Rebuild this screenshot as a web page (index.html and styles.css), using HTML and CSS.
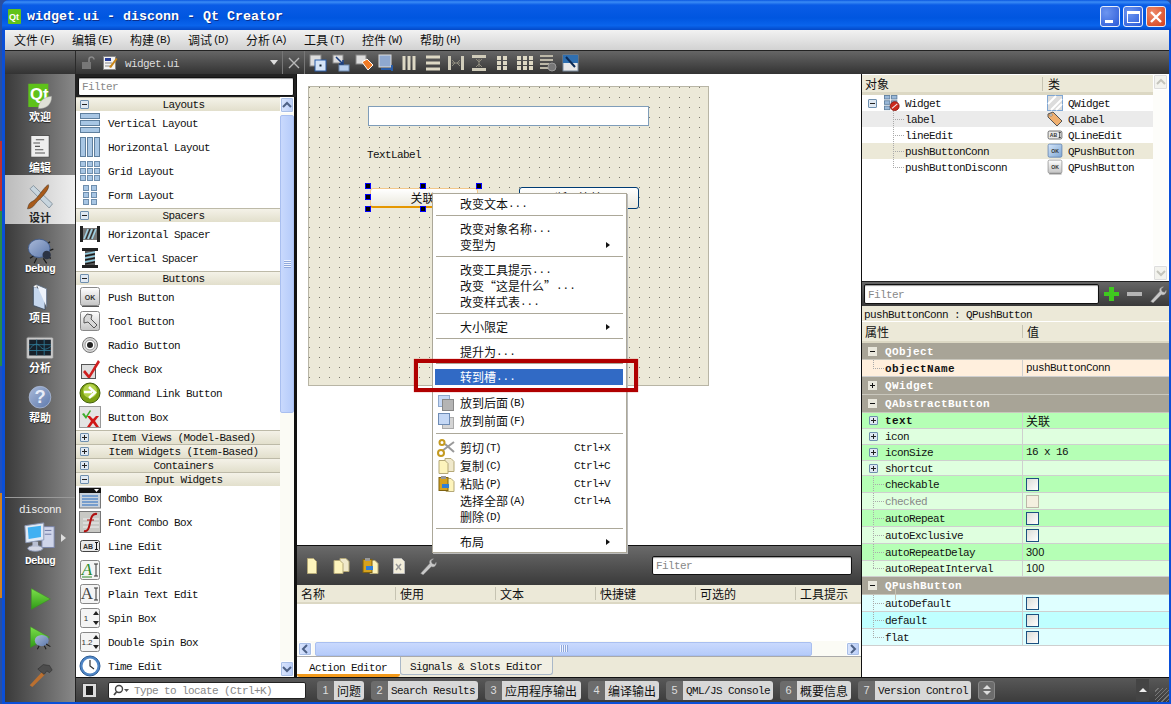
FILE: index.html
```html
<!DOCTYPE html>
<html lang="zh">
<head>
<meta charset="utf-8">
<title>widget.ui - disconn - Qt Creator</title>
<link rel="stylesheet" href="styles.css">
</head>
<body>
<svg class="defs" width="0" height="0" aria-hidden="true">
<defs>
<linearGradient id="gb" x1="0" y1="0" x2="0" y2="1"><stop offset="0" stop-color="#fff"/><stop offset="1" stop-color="#c4c4c4"/></linearGradient>
<linearGradient id="gbl" x1="0" y1="0" x2="1" y2="1"><stop offset="0" stop-color="#d5e6fa"/><stop offset="1" stop-color="#7ea6d3"/></linearGradient>
<linearGradient id="gg" x1="0" y1="0" x2="0" y2="1"><stop offset="0" stop-color="#7ce04a"/><stop offset="1" stop-color="#2f9a17"/></linearGradient>
<linearGradient id="gsc" x1="0" y1="0" x2="1" y2="1"><stop offset="0" stop-color="#a9b9d8"/><stop offset="1" stop-color="#5d79ac"/></linearGradient>
<symbol id="i-lv" viewBox="0 0 22 22"><g fill="#a8c6e4" stroke="#5f7f9e"><rect x="1.5" y="1.5" width="19" height="5"/><rect x="1.5" y="8.5" width="19" height="5"/><rect x="1.5" y="15.5" width="19" height="5"/></g></symbol>
<symbol id="i-lh" viewBox="0 0 22 22"><g fill="#a8c6e4" stroke="#5f7f9e"><rect x="1.5" y="1.5" width="5" height="19"/><rect x="8.5" y="1.5" width="5" height="19"/><rect x="15.5" y="1.5" width="5" height="19"/></g></symbol>
<symbol id="i-lg" viewBox="0 0 22 22"><g fill="#a8c6e4" stroke="#6f8fae"><rect x="1.5" y="1.5" width="5" height="5"/><rect x="8.5" y="1.5" width="5" height="5"/><rect x="15.5" y="1.5" width="5" height="5"/><rect x="1.5" y="8.5" width="5" height="5"/><rect x="8.5" y="8.5" width="5" height="5"/><rect x="15.5" y="8.5" width="5" height="5"/><rect x="1.5" y="15.5" width="5" height="5"/><rect x="8.5" y="15.5" width="5" height="5"/><rect x="15.5" y="15.5" width="5" height="5"/></g></symbol>
<symbol id="i-lf" viewBox="0 0 22 22"><g fill="#a8c6e4" stroke="#6f8fae"><rect x="4.5" y="1.5" width="5" height="5"/><rect x="12.5" y="1.5" width="5" height="5"/><rect x="4.5" y="8.5" width="5" height="5"/><rect x="12.5" y="8.5" width="5" height="5"/><rect x="4.5" y="15.5" width="5" height="5"/><rect x="12.5" y="15.5" width="5" height="5"/></g></symbol>
<symbol id="i-sh" viewBox="0 0 22 22"><rect x="1" y="3" width="3" height="16" fill="#222"/><rect x="18" y="3" width="3" height="16" fill="#222"/><rect x="4" y="5" width="14" height="12" fill="#777"/><path d="M5 16 9 6M9 16l4-10M13 16l4-10" stroke="#9ed3e6" stroke-width="1.5"/><path d="M7 16l4-10M11 16l4-10" stroke="#222"/></symbol>
<symbol id="i-sv" viewBox="0 0 22 22"><rect x="3" y="1" width="16" height="3" fill="#222"/><rect x="3" y="18" width="16" height="3" fill="#222"/><rect x="6" y="4" width="10" height="14" fill="#555"/><path d="M6 7l10-2M6 11l10-2M6 15l10-2" stroke="#8fcbe0" stroke-width="1.5"/><path d="M6 9l10-2M6 13l10-2M6 17l10-2" stroke="#111"/></symbol>
<symbol id="i-ok" viewBox="0 0 22 22"><rect x="1.5" y="1.5" width="19" height="18" rx="2" fill="url(#gb)" stroke="#888"/><path d="M3 20.5h17" stroke="#555"/><text class="svgt" x="11" y="13.5" text-anchor="middle">OK</text></symbol>
<symbol id="i-okb" viewBox="0 0 22 22"><rect x="1.5" y="1.5" width="19" height="18" rx="2" fill="url(#gbl)" stroke="#5578a8"/><text class="svgt" x="11" y="13.5" text-anchor="middle">OK</text></symbol>
<symbol id="i-tb" viewBox="0 0 22 22"><rect x="1.5" y="1.5" width="19" height="19" rx="2" fill="url(#gb)" stroke="#888"/><path d="M5 8l3-4 5 1-1 4 6 6-3 3-6-6-4 1z" fill="#d8d8d8" stroke="#555"/></symbol>
<symbol id="i-rb" viewBox="0 0 22 22"><circle cx="11" cy="11" r="7.5" fill="#d8d8d8" stroke="#777"/><circle cx="11" cy="11" r="5" fill="#fff" stroke="#999"/><circle cx="11" cy="11" r="3" fill="#222"/></symbol>
<symbol id="i-cb" viewBox="0 0 22 22"><rect x="2.5" y="6.5" width="14" height="14" fill="#dedede" stroke="#555"/><path d="M6 12l4 5L19 2l2 2-10 16H9L4 14z" fill="#cf1f1f"/></symbol>
<symbol id="i-cl" viewBox="0 0 22 22"><circle cx="11" cy="11" r="10" fill="#7b9f12" stroke="#43600a"/><circle cx="11" cy="9" r="7" fill="#b3d24a"/><path d="M5 10h8M10 5l6 5.500-6 5.500" fill="none" stroke="#fff" stroke-width="2.500"/></symbol>
<symbol id="i-bb" viewBox="0 0 22 22"><rect x=".5" y=".5" width="21" height="21" fill="#e4e4e4" stroke="#999"/><path d="M3 8l2-1 2 3 4-6 1 1-5 8z" fill="#3eae2c"/><path d="M8 10l3 0 3 3 3-3 3 0-4 5 4 6h-3l-3-4-3 4H8l4-6z" fill="#d01818"/></symbol>
<symbol id="i-co" viewBox="0 0 22 22"><rect x=".5" y="1" width="21" height="20" fill="#c8d2dc" stroke="#777"/><rect x="0" y="1" width="22" height="5" fill="#111"/><path d="M15 2h5l-2.500 3z" fill="#fff"/><path d="M3 9h16M3 12h16M3 15h16M3 18h16" stroke="#5a8cc8" stroke-width="1.500"/></symbol>
<symbol id="i-fc" viewBox="0 0 22 22"><rect x=".5" y=".5" width="21" height="21" fill="#c8c8c4" stroke="#777"/><path d="M4 8h16M4 12h16M4 16h16" stroke="#efefef"/><path d="M5 20c4 1 5-3 6-8s2-10 7-9" fill="none" stroke="#b01010" stroke-width="2"/><path d="M8 9h7" stroke="#b01010"/></symbol>
<symbol id="i-le" viewBox="0 0 22 22"><rect x="1.500" y="5.500" width="19" height="11" rx="2" fill="#e8e8e8" stroke="#444"/><text class="svgt" x="9" y="14" text-anchor="middle">AB</text><path d="M16 7.500h3M16 14.500h3M17.500 7.500v7" stroke="#111"/></symbol>
<symbol id="i-te" viewBox="0 0 22 22"><rect x="1.500" y="1.500" width="19" height="19" rx="2" fill="#f4f4f4" stroke="#888"/><text class="svgs gr" x="8" y="16" text-anchor="middle">A</text><path d="M3 18h10" stroke="#2a8a2a"/><path d="M15 5h4M15 17h4M17 5v12" stroke="#333"/></symbol>
<symbol id="i-pt" viewBox="0 0 22 22"><rect x="1.500" y="1.500" width="19" height="19" rx="2" fill="#f4f4f4" stroke="#888"/><text class="svgs" x="8" y="16" text-anchor="middle">A</text><path d="M15 5h4M15 17h4M17 5v12" stroke="#333"/></symbol>
<symbol id="i-sp" viewBox="0 0 22 22"><rect x="1.500" y="1.500" width="19" height="19" rx="2" fill="#f4f4f4" stroke="#888"/><text class="svgt dk" x="7" y="14" text-anchor="middle">1</text><path d="M14 8l3-4 3 4zM14 14l3 4 3-4z" fill="#222"/></symbol>
<symbol id="i-ds" viewBox="0 0 22 22"><rect x="1.500" y="1.500" width="19" height="19" rx="2" fill="#f4f4f4" stroke="#888"/><text class="svgt dk" x="8" y="14" text-anchor="middle">1.2</text><path d="M14 8l3-4 3 4zM14 14l3 4 3-4z" fill="#222"/></symbol>
<symbol id="i-ti" viewBox="0 0 22 22"><circle cx="11" cy="11" r="10" fill="#4f86c6" stroke="#2d5d96"/><circle cx="11" cy="11" r="7.500" fill="#fff"/><path d="M11 5v6l4 3" fill="none" stroke="#333" stroke-width="1.200"/></symbol>
<symbol id="i-ws" viewBox="0 0 16 16"><rect x=".5" y=".5" width="15" height="15" fill="#dcdcdc" stroke="#7ea6d3"/><path d="M1 9l8-8M4 15L15 4M9 15l6-6" stroke="#fff" stroke-width="2"/></symbol>
<symbol id="i-lb" viewBox="0 0 16 16"><path d="M1 3l5-2 9 9-5 5-9-9z" fill="#f0b070" stroke="#555"/><circle cx="4" cy="4" r="1.200" fill="#fff" stroke="#555" stroke-width=".6"/></symbol>
<symbol id="i-wd" viewBox="0 0 18 18"><g fill="#9ab8d8" stroke="#5f7f9e"><rect x=".5" y=".5" width="6" height="4"/><rect x="8.500" y=".5" width="6" height="4"/><rect x=".5" y="6.500" width="6" height="4"/><rect x="8.500" y="6.500" width="6" height="4"/><rect x=".5" y="12.500" width="6" height="4"/></g><circle cx="12" cy="12.500" r="5" fill="#cc2a1e" stroke="#8a150e"/><path d="M9 15l6-5" stroke="#eee" stroke-width="1.200"/></symbol>
<symbol id="i-doc" viewBox="0 0 18 18"><path d="M4.500 1.500h6l3 3v12h-9z" fill="#fdf4bc" stroke="#b5a978"/></symbol>
<symbol id="i-copy" viewBox="0 0 18 18"><path d="M8 1.500h6l3 3v10H8z" fill="#f0e9cc" stroke="#b5a978"/><path d="M2 3.500h6l3 3v10H2z" fill="#fdf4bc" stroke="#b5a978"/></symbol>
<symbol id="i-paste" viewBox="0 0 18 18"><path d="M9 3.500h5l3 3v10H9z" fill="#fdf4bc" stroke="#b5a978"/><rect x="2" y="2.500" width="9" height="13" fill="#d6a21e" stroke="#7f6210"/><rect x="4" y="1" width="5" height="3" fill="#999"/><path d="M5 9h7v4H5z" fill="#2f7fd8"/></symbol>
<symbol id="i-del" viewBox="0 0 18 18"><path d="M3.500 1.500h8l3 3v12h-11z" fill="#f3eedb" stroke="#bbb"/><path d="M6 7l5 6M11 7l-5 6" stroke="#999" stroke-width="1.500"/></symbol>
<symbol id="i-cut" viewBox="0 0 18 18"><path d="M17 3L5 12M17 13L8 5" stroke="#9a9a9a" stroke-width="2"/><circle cx="4" cy="14" r="3" fill="none" stroke="#c49a20" stroke-width="2"/><circle cx="5" cy="3.500" r="2.500" fill="none" stroke="#c49a20" stroke-width="2"/></symbol>
<symbol id="i-wr" viewBox="0 0 22 22"><path d="M2 20L13 8c-1-3 1-6 5-6l-3 3 1 3 3 1 2-3c1 4-2 7-6 6L5 22z" fill="#c8c8c8" stroke="#777" stroke-width=".6"/></symbol>
<symbol id="i-back" viewBox="0 0 18 18"><rect x="1.500" y="1.500" width="11" height="11" fill="#c5d8f5" stroke="#8ea8cc"/><rect x="5.500" y="5.500" width="11" height="11" fill="#b4b4b4" stroke="#888"/></symbol>
<symbol id="i-front" viewBox="0 0 18 18"><rect x="5.500" y="5.500" width="11" height="11" fill="#d4d4d4" stroke="#aaa"/><rect x="1.500" y="1.500" width="11" height="11" fill="#c5d8f5" stroke="#6f8cb4"/></symbol>
<symbol id="i-bug" viewBox="0 0 36 36"><path d="M12 24l-6 4M14 28l-3 6M24 24l7 4M22 28l4 6M24 13l6-5M28 19l6-2" stroke="#1c1c1c" stroke-width="1.500" fill="none"/><ellipse cx="17" cy="16" rx="13" ry="11" fill="url(#gsc)" stroke="#3e5a8c"/><circle cx="26" cy="24" r="5" fill="#2b3345"/></symbol>
</defs>
</svg>
<div class="win">
  <header class="titlebar">
    <svg class="ticon" viewBox="0 0 16 18"><rect x="1" y="1" width="13" height="15" rx="1" fill="#61c21a"/><text class="qt-s" x="2" y="12">Qt</text></svg>
    <span class="ttext">widget.ui - disconn - Qt Creator</span>
    <div class="wbtns">
      <div class="wb wb-min"><span class="g-min"></span></div>
      <div class="wb wb-max"><span class="g-max"></span></div>
      <div class="wb wb-close"><svg viewBox="0 0 14 14" width="14" height="14"><path d="M2 2l10 10M12 2L2 12" stroke="#fff" stroke-width="2.400"/></svg></div>
    </div>
  </header>
  <nav class="menubar">
    <span class="mb"><span class="c">文件</span><span class="acc">(F)</span></span>
    <span class="mb"><span class="c">编辑</span><span class="acc">(E)</span></span>
    <span class="mb"><span class="c">构建</span><span class="acc">(B)</span></span>
    <span class="mb"><span class="c">调试</span><span class="acc">(D)</span></span>
    <span class="mb"><span class="c">分析</span><span class="acc">(A)</span></span>
    <span class="mb"><span class="c">工具</span><span class="acc">(T)</span></span>
    <span class="mb"><span class="c">控件</span><span class="acc">(W)</span></span>
    <span class="mb"><span class="c">帮助</span><span class="acc">(H)</span></span>
  </nav>
  <div class="shell">
    <div class="topbar">
      <div class="corner"></div>
      <div class="doctab">
        <svg class="lock" viewBox="0 0 14 14" width="14" height="14"><path d="M8 6V3.500a2.500 2.500 0 0 1 5 0" fill="none" stroke="#8a8a8a" stroke-width="1.500"/><rect x="1" y="6" width="9" height="7" fill="#777"/></svg>
        <svg class="docic" viewBox="0 0 16 16" width="16" height="16"><rect x="1.500" y="1.500" width="12" height="13" fill="#f4f4f4" stroke="#888"/><rect x="3" y="3" width="6" height="3" fill="#2a3f9a"/><path d="M3 8h7M3 11h7" stroke="#888"/><path d="M7 12L14 3l1.500 1L9 13z" fill="#c8861a"/></svg>
        <span class="docname">widget.ui</span>
        <span class="docarrow"></span>
      </div>
      <div class="docclose"><svg viewBox="0 0 12 12" width="12" height="12"><path d="M1 1l10 10M11 1L1 11" stroke="#b8b8b8" stroke-width="1.400"/></svg></div>
      <div class="fbtns">
        <svg class="fb" viewBox="0 0 18 18"><rect x="1" y="1" width="11" height="11" fill="#ddd" stroke="#888"/><rect x="6" y="6" width="11" height="11" fill="#d5e4f7" stroke="#2a5da8"/><rect x="10.500" y="10.500" width="2" height="2" fill="#123"/></svg>
        <svg class="fb" viewBox="0 0 18 18"><rect x="1" y="1" width="10" height="8" fill="#ddd" stroke="#888"/><rect x="7" y="11" width="10" height="6" fill="#b9cfee" stroke="#6f8cb4"/><path d="M4 3l7 7M11 6v4H7" stroke="#1c3f80" stroke-width="1.500" fill="none"/></svg>
        <svg class="fb" viewBox="0 0 18 18"><rect x="1" y="1" width="10" height="9" fill="#ddd" stroke="#888"/><path d="M7 8l5-3 6 6-5 5z" fill="#f07a25" stroke="#fff"/></svg>
        <svg class="fb" viewBox="0 0 18 18"><rect x="1" y="1" width="12" height="12" fill="#8fa8cf" stroke="#ddd"/><path d="M3 15h10M14 11v6" stroke="#2a5da8" stroke-width="2"/></svg>
        <svg class="fb" viewBox="0 0 18 18"><path d="M3 2v14M8 2v14M13 2v14" stroke="#ddd8c4" stroke-width="3"/></svg>
        <svg class="fb" viewBox="0 0 18 18"><path d="M2 3h14M2 9h14M2 15h14" stroke="#ddd8c4" stroke-width="3"/></svg>
        <svg class="fb" viewBox="0 0 18 18"><path d="M2.500 2v14M15.500 2v14" stroke="#d0ccba" stroke-width="3"/><path d="M5 9h8M5 6l3 3-3 3M13 6l-3 3 3 3" stroke="#8f8c7e" fill="none"/></svg>
        <svg class="fb" viewBox="0 0 18 18"><path d="M2 2.500h14M2 15.500h14" stroke="#d0ccba" stroke-width="3"/><path d="M9 5v8M6 5l3 3 3-3M6 13l3-3 3 3" stroke="#8f8c7e" fill="none"/></svg>
        <svg class="fb" viewBox="0 0 18 18"><g fill="#ddd8c4"><rect x="4" y="2" width="4" height="4"/><rect x="10" y="2" width="4" height="4"/><rect x="4" y="7" width="4" height="4"/><rect x="10" y="7" width="4" height="4"/><rect x="4" y="12" width="4" height="4"/><rect x="10" y="12" width="4" height="4"/></g></svg>
        <svg class="fb" viewBox="0 0 18 18"><g fill="#ddd8c4"><rect x="1" y="2" width="4" height="4"/><rect x="7" y="2" width="4" height="4"/><rect x="13" y="2" width="4" height="4"/><rect x="1" y="7" width="4" height="4"/><rect x="7" y="7" width="4" height="4"/><rect x="13" y="7" width="4" height="4"/><rect x="1" y="12" width="4" height="4"/><rect x="7" y="12" width="4" height="4"/><rect x="13" y="12" width="4" height="4"/></g></svg>
        <svg class="fb" viewBox="0 0 18 18"><path d="M1 2h13M1 6h13M1 10h9M1 14h9" stroke="#bcb8a8" stroke-width="2"/><circle cx="13" cy="13" r="4" fill="#777" stroke="#999"/></svg>
        <svg class="fb" viewBox="0 0 18 18"><rect x="1" y="1" width="15" height="16" fill="#e8e8e8" stroke="#7a8ca0"/><rect x="1" y="1" width="15" height="8" fill="#2f6fb0"/><path d="M4 3l9 10" stroke="#0b2a55" stroke-width="2"/></svg>
      </div>
    </div>

    <aside class="rail">
      <div class="rtab first">
        <svg class="ric" viewBox="0 0 36 36"><path d="M4 2h24v24l-6 4H4z" fill="#5ec21a"/><text class="qt" x="6" y="21">Qt</text><path d="M16 32c0-8 6-14 16-15 0 10-6 15-16 15z" fill="#dfe0d6" stroke="#999" stroke-width=".5"/></svg>
        <span class="rl c">欢迎</span>
      </div>
      <div class="rtab">
        <svg class="ric" viewBox="0 0 36 36"><rect x="7" y="3" width="22" height="26" fill="#eee" stroke="#444"/><path d="M13 8h10M10 12h8M12 16h6M12 20h10M12 24h12" stroke="#555" stroke-width="1.300"/></svg>
        <span class="rl c">编辑</span>
      </div>
      <div class="rtab active">
        <svg class="ric" viewBox="0 0 36 36"><path d="M6 7l4-4 23 22-4 5z" fill="#c8d5de" stroke="#7b8a96"/><path d="M28 2c2 3-3 11-13 20l-5 6c-2 2-5 3-7 3 1-3 1-6 4-8 2-1 4-2 6-4C19 12 24 4 28 2z" fill="#a85a1a" stroke="#3d2a18" stroke-width=".6"/></svg>
        <span class="rl c dark">设计</span>
      </div>
      <div class="rtab">
        <svg class="ric" viewBox="0 0 36 36"><use href="#i-bug"/></svg>
        <span class="rl m">Debug</span>
      </div>
      <div class="rtab">
        <svg class="ric" viewBox="0 0 36 36"><path d="M10 4l14 5v23l-14-5z" fill="#c6d7ee" stroke="#37465a"/><path d="M14 2l12 5v22" fill="#eef3fb" stroke="#5b6c82"/><path d="M10 4l4-2v4" fill="#fff"/></svg>
        <span class="rl c">项目</span>
      </div>
      <div class="rtab">
        <svg class="ric" viewBox="0 0 36 36"><rect x="2" y="5" width="32" height="26" rx="2" fill="#c8c8c8" stroke="#777"/><rect x="5" y="8" width="26" height="19" fill="#16202a"/><path d="M5 20c6-8 10-8 13-4s7 5 13 0M14 8v19M23 8v19M5 14h26M5 21h26" stroke="#2f7a96" fill="none"/></svg>
        <span class="rl c">分析</span>
      </div>
      <div class="rtab">
        <svg class="ric" viewBox="0 0 36 36"><circle cx="18" cy="17" r="13" fill="url(#gsc)" stroke="#aab8d4"/><text class="help" x="18" y="24" text-anchor="middle">?</text></svg>
        <span class="rl c">帮助</span>
      </div>
      <div class="rspace"></div>
      <div class="kit">
        <span class="kitname">disconn</span>
        <div class="kitrow">
          <svg class="kitic" viewBox="0 0 36 36"><rect x="20" y="6" width="13" height="22" fill="#cfd5ea" stroke="#7a84a8"/><path d="M23 10h7M23 14h7" stroke="#6a75a0"/><path d="M2 5l20-3v18L3 23z" fill="#dfe9f5" stroke="#8a97b5"/><path d="M5 7l14-2v12L6 19z" fill="#3fb0f2"/><ellipse cx="13" cy="29" rx="8" ry="3" fill="#d5d8e5" stroke="#8a97b5"/><path d="M10 22h6v5h-6z" fill="#b9bfd2"/></svg>
          <span class="kitarrow"></span>
        </div>
        <span class="rl m kitdbg">Debug</span>
      </div>
      <div class="runbtn run1"><svg viewBox="0 0 30 30" width="26" height="26"><path d="M5 3l22 12L5 27z" fill="url(#gg)" stroke="#3c8a25" stroke-width=".6"/></svg></div>
      <div class="runbtn"><svg viewBox="0 0 30 30" width="26" height="26"><path d="M4 2l22 12L4 26z" fill="url(#gg)" stroke="#3c8a25" stroke-width=".6"/><ellipse cx="17" cy="18" rx="8" ry="6.500" fill="url(#gsc)"/><path d="M22 22l5 3M14 24l-2 4M20 24l2 4" stroke="#1c1c1c" stroke-width="1.200"/></svg></div>
      <div class="runbtn run3"><svg viewBox="0 0 30 30" width="27" height="27"><path d="M3 27L17 12l3 3L6 29z" fill="#bb7030"/><path d="M12 9l6-5 7 1 3 5-3 3-3-2-3 4z" fill="#4d4d4d" stroke="#222" stroke-width=".5"/></svg></div>
    </aside>

    <section class="wbox">
      <div class="fltrow"><div class="flt">Filter</div></div>
      <div class="wbody">
        <div class="wlist">
          <div class="cat"><span class="exp"></span><span class="catn">Layouts</span></div>
          <div class="item"><svg class="iic"><use href="#i-lv"/></svg>Vertical Layout</div>
          <div class="item"><svg class="iic"><use href="#i-lh"/></svg>Horizontal Layout</div>
          <div class="item"><svg class="iic"><use href="#i-lg"/></svg>Grid Layout</div>
          <div class="item"><svg class="iic"><use href="#i-lf"/></svg>Form Layout</div>
          <div class="cat"><span class="exp"></span><span class="catn">Spacers</span></div>
          <div class="item"><svg class="iic"><use href="#i-sh"/></svg>Horizontal Spacer</div>
          <div class="item"><svg class="iic"><use href="#i-sv"/></svg>Vertical Spacer</div>
          <div class="cat"><span class="exp"></span><span class="catn">Buttons</span></div>
          <div class="item"><svg class="iic"><use href="#i-ok"/></svg>Push Button</div>
          <div class="item"><svg class="iic"><use href="#i-tb"/></svg>Tool Button</div>
          <div class="item"><svg class="iic"><use href="#i-rb"/></svg>Radio Button</div>
          <div class="item"><svg class="iic"><use href="#i-cb"/></svg>Check Box</div>
          <div class="item"><svg class="iic"><use href="#i-cl"/></svg>Command Link Button</div>
          <div class="item"><svg class="iic"><use href="#i-bb"/></svg>Button Box</div>
          <div class="cat"><span class="exp plus"></span><span class="catn">Item Views (Model-Based)</span></div>
          <div class="cat"><span class="exp plus"></span><span class="catn">Item Widgets (Item-Based)</span></div>
          <div class="cat"><span class="exp plus"></span><span class="catn">Containers</span></div>
          <div class="cat"><span class="exp"></span><span class="catn">Input Widgets</span></div>
          <div class="item"><svg class="iic"><use href="#i-co"/></svg>Combo Box</div>
          <div class="item"><svg class="iic"><use href="#i-fc"/></svg>Font Combo Box</div>
          <div class="item"><svg class="iic"><use href="#i-le"/></svg>Line Edit</div>
          <div class="item"><svg class="iic"><use href="#i-te"/></svg>Text Edit</div>
          <div class="item"><svg class="iic"><use href="#i-pt"/></svg>Plain Text Edit</div>
          <div class="item"><svg class="iic"><use href="#i-sp"/></svg>Spin Box</div>
          <div class="item"><svg class="iic"><use href="#i-ds"/></svg>Double Spin Box</div>
          <div class="item"><svg class="iic"><use href="#i-ti"/></svg>Time Edit</div>
        </div>
        <div class="vsb">
          <div class="sbb"><svg viewBox="0 0 10 8" width="10" height="8"><path d="M1 6l4-4 4 4" fill="none" stroke="#4d6185" stroke-width="2"/></svg></div>
          <div class="vthumb"><span class="grip"></span></div>
          <div class="sbfill"></div>
          <div class="sbb"><svg viewBox="0 0 10 8" width="10" height="8"><path d="M1 2l4 4 4-4" fill="none" stroke="#4d6185" stroke-width="2"/></svg></div>
        </div>
      </div>
    </section>

    <main class="center">
      <div class="canvas">
        <div class="form">
          <div class="f-line"></div>
          <div class="f-label">TextLabel</div>
          <div class="f-btn sel"><span class="c">关联</span></div>
          <div class="f-btn two"><span class="c">断开连接</span></div>
          <i class="hd h1"></i><i class="hd h2"></i><i class="hd h3"></i><i class="hd h4"></i><i class="hd h5"></i><i class="hd h6"></i>
        </div>
      </div>
      <div class="actbar">
        <svg class="ab"><use href="#i-doc"/></svg>
        <svg class="ab"><use href="#i-copy"/></svg>
        <svg class="ab"><use href="#i-paste"/></svg>
        <svg class="ab"><use href="#i-del"/></svg>
        <svg class="ab"><use href="#i-wr"/></svg>
        <div class="flt actflt">Filter</div>
      </div>
      <div class="acthead">
        <span class="ah c">名称</span><span class="ah c">使用</span><span class="ah c">文本</span><span class="ah c">快捷键</span><span class="ah c">可选的</span><span class="ah c">工具提示</span>
      </div>
      <div class="actbody"></div>
      <div class="hsb">
        <div class="sbb hz"><svg viewBox="0 0 8 10" width="8" height="10"><path d="M6 1L2 5l4 4" fill="none" stroke="#4d6185" stroke-width="2"/></svg></div>
        <div class="hthumb"><span class="hgrip"></span></div>
        <div class="sbfill"></div>
        <div class="sbb hz"><svg viewBox="0 0 8 10" width="8" height="10"><path d="M2 1l4 4-4 4" fill="none" stroke="#4d6185" stroke-width="2"/></svg></div>
      </div>
      <div class="tabs">
        <div class="tab on">Action Editor</div>
        <div class="tab">Signals &amp; Slots Editor</div>
      </div>

      <div class="ctx">
        <div class="mi"><span class="c">改变文本</span><span class="dots">...</span></div>
        <div class="ms"></div>
        <div class="mi"><span class="c">改变对象名称</span><span class="dots">...</span></div>
        <div class="mi"><span class="c">变型为</span><i class="sub"></i></div>
        <div class="ms"></div>
        <div class="mi"><span class="c">改变工具提示</span><span class="dots">...</span></div>
        <div class="mi"><span class="c">改变“这是什么”</span><span class="dots">...</span></div>
        <div class="mi"><span class="c">改变样式表</span><span class="dots">...</span></div>
        <div class="ms"></div>
        <div class="mi"><span class="c">大小限定</span><i class="sub"></i></div>
        <div class="ms"></div>
        <div class="mi"><span class="c">提升为</span><span class="dots">...</span></div>
        <div class="ms"></div>
        <div class="mi hi"><span class="c">转到槽</span><span class="dots">...</span></div>
        <div class="ms"></div>
        <div class="mi ic"><svg class="mic"><use href="#i-back"/></svg><span class="c">放到后面</span><span class="acc">(B)</span></div>
        <div class="mi ic"><svg class="mic"><use href="#i-front"/></svg><span class="c">放到前面</span><span class="acc">(F)</span></div>
        <div class="ms"></div>
        <div class="mi ic"><svg class="mic"><use href="#i-cut"/></svg><span class="c">剪切</span><span class="acc">(T)</span><span class="sc">Ctrl+X</span></div>
        <div class="mi ic"><svg class="mic"><use href="#i-copy"/></svg><span class="c">复制</span><span class="acc">(C)</span><span class="sc">Ctrl+C</span></div>
        <div class="mi ic"><svg class="mic"><use href="#i-paste"/></svg><span class="c">粘贴</span><span class="acc">(P)</span><span class="sc">Ctrl+V</span></div>
        <div class="mi"><span class="c">选择全部</span><span class="acc">(A)</span><span class="sc">Ctrl+A</span></div>
        <div class="mi"><span class="c">删除</span><span class="acc">(D)</span></div>
        <div class="ms"></div>
        <div class="mi"><span class="c">布局</span><i class="sub"></i></div>
      </div>
      <div class="redbox"></div>
    </main>

    <section class="right">
      <div class="objs">
        <div class="objmain">
          <div class="ohead"><span class="oh1 c">对象</span><span class="oh2 c">类</span></div>
          <div class="orow"><div class="on"><span class="exp ox"></span><svg class="oic wd"><use href="#i-wd"/></svg>Widget</div><div class="oc"><svg class="oic"><use href="#i-ws"/></svg>QWidget</div></div>
          <div class="orow gry"><div class="on"><span class="bn"></span>label</div><div class="oc"><svg class="oic"><use href="#i-lb"/></svg>QLabel</div></div>
          <div class="orow"><div class="on"><span class="bn"></span>lineEdit</div><div class="oc"><svg class="oic"><use href="#i-le"/></svg>QLineEdit</div></div>
          <div class="orow cur"><div class="on"><span class="bn"></span>pushButtonConn</div><div class="oc"><svg class="oic"><use href="#i-okb"/></svg>QPushButton</div></div>
          <div class="orow"><div class="on"><span class="bn end"></span>pushButtonDisconn</div><div class="oc"><svg class="oic"><use href="#i-ok"/></svg>QPushButton</div></div>
        </div>
        <div class="vsb pale">
          <div class="sbb p"><svg viewBox="0 0 10 8" width="10" height="8"><path d="M1 6l4-4 4 4" fill="none" stroke="#c4c4bc" stroke-width="2"/></svg></div>
          <div class="sbfill"></div>
          <div class="sbb p"><svg viewBox="0 0 10 8" width="10" height="8"><path d="M1 2l4 4 4-4" fill="none" stroke="#c4c4bc" stroke-width="2"/></svg></div>
        </div>
      </div>
      <div class="ptool">
        <div class="flt pflt">Filter</div>
        <svg class="pt-i" viewBox="0 0 18 18"><path d="M6 2h5v5h5v4h-5v5H6v-5H1V7h5z" fill="#3fc81f"/></svg>
        <svg class="pt-i" viewBox="0 0 18 18"><rect x="1" y="7" width="15" height="4" fill="#b4b4b4"/></svg>
        <svg class="pt-i" viewBox="0 0 22 22"><use href="#i-wr"/></svg>
      </div>
      <div class="pclass">pushButtonConn : QPushButton</div>
      <div class="phead"><span class="ph1 c">属性</span><span class="ph2 c">值</span></div>
      <div class="pbody">
        <div class="grp h17"><span class="gx"></span>QObject</div>
        <div class="pr h17 obn"><div class="pn"><span class="bn end"></span><b>objectName</b></div><div class="pv">pushButtonConn</div></div>
        <div class="grp h18"><span class="gx plus"></span>QWidget</div>
        <div class="grp h18"><span class="gx"></span>QAbstractButton</div>
        <div class="pr h16 g1"><div class="pn"><span class="exp plus px"></span><b>text</b></div><div class="pv c">关联</div></div>
        <div class="pr h16 g2"><div class="pn"><span class="exp plus px"></span>icon</div><div class="pv"></div></div>
        <div class="pr h16 g1"><div class="pn"><span class="exp plus px"></span>iconSize</div><div class="pv">16 x 16</div></div>
        <div class="pr h15 g2"><div class="pn"><span class="exp plus px"></span>shortcut</div><div class="pv"></div></div>
        <div class="pr h17 g1"><div class="pn"><span class="bn"></span>checkable</div><div class="pv"><i class="ck"></i></div></div>
        <div class="pr h17 g2"><div class="pn dis"><span class="bn"></span>checked</div><div class="pv"><i class="ck off"></i></div></div>
        <div class="pr h17 g1"><div class="pn"><span class="bn"></span>autoRepeat</div><div class="pv"><i class="ck"></i></div></div>
        <div class="pr h17 g2"><div class="pn"><span class="bn"></span>autoExclusive</div><div class="pv"><i class="ck"></i></div></div>
        <div class="pr h17 g1"><div class="pn"><span class="bn"></span>autoRepeatDelay</div><div class="pv num">300</div></div>
        <div class="pr h16 g2"><div class="pn"><span class="bn end"></span>autoRepeatInterval</div><div class="pv num">100</div></div>
        <div class="grp h18"><span class="gx"></span>QPushButton</div>
        <div class="pr h17 c2"><div class="pn"><span class="bn"></span>autoDefault</div><div class="pv"><i class="ck"></i></div></div>
        <div class="pr h17 c1"><div class="pn"><span class="bn"></span>default</div><div class="pv"><i class="ck"></i></div></div>
        <div class="pr h17 c2"><div class="pn"><span class="bn end"></span>flat</div><div class="pv"><i class="ck"></i></div></div>
      </div>
    </section>

    <footer class="status">
      <div class="togg"><span></span></div>
      <div class="locator">
        <svg class="mag" viewBox="0 0 16 12" width="16" height="12"><circle cx="6" cy="5" r="3.500" fill="none" stroke="#444" stroke-width="1.400"/><path d="M3.500 8L1 11" stroke="#444" stroke-width="1.800"/><path d="M11 5h5l-2.500 3z" fill="#555"/></svg>
        <span>Type to locate (Ctrl+K)</span>
      </div>
      <div class="chips">
        <div class="chip"><span class="n">1</span><span class="l w30 c">问题</span></div>
        <div class="chip"><span class="n">2</span><span class="l w90">Search Results</span></div>
        <div class="chip"><span class="n">3</span><span class="l w79 c">应用程序输出</span></div>
        <div class="chip"><span class="n">4</span><span class="l w54 c">编译输出</span></div>
        <div class="chip"><span class="n">5</span><span class="l w90">QML/JS Console</span></div>
        <div class="chip"><span class="n">6</span><span class="l w54 c">概要信息</span></div>
        <div class="chip"><span class="n">7</span><span class="l w96">Version Control</span></div>
        <div class="updown"><svg viewBox="0 0 10 14" width="10" height="14"><path d="M1 6l4-4 4 4zM1 8l4 4 4-4z" fill="#ddd"/></svg></div>
      </div>
      <div class="expd"><span></span></div>
      <div class="gripc"></div>
    </footer>
  </div>
</div>
</body>
</html>
```
FILE: styles.css
```css
* { box-sizing: border-box; }
html, body { margin: 0; padding: 0; }
body {
  width: 1171px;
  height: 704px;
  overflow: hidden;
  font: 11px/1 "Liberation Mono", "Noto Sans CJK SC", monospace;
  letter-spacing: -0.6px;
  color: #111;
  background: linear-gradient(#2a4fa0 0 20%, #c03030 20% 30%, #2a8a4a 30% 52%, #2050c0 52% 70%, #d08020 70% 85%, #2a4fa0 85%);
}
.defs { position: absolute; }
.c { font-family: "Noto Sans CJK SC", sans-serif; font-size: 12px; letter-spacing: 0; }
.m { font-family: "Liberation Mono", monospace; }
.acc { font-size: 11px; letter-spacing: -1.6px; margin-left: 1px; }
.svgt { font: bold 7px "Liberation Sans", sans-serif; letter-spacing: 0; fill: #333; }
.svgt.dk { font-size: 8px; font-weight: normal; }
.svgs { font: 17px "Liberation Serif", serif; letter-spacing: 0; fill: #444; }
.svgs.gr { fill: #2a8a2a; font-style: italic; }
.qt { font: bold 20px "Liberation Sans", sans-serif; letter-spacing: 0; fill: #fff; }
.qt-s { font: bold 9px "Liberation Sans", sans-serif; letter-spacing: 0; fill: #fff; }
.help { font: bold 22px "Liberation Sans", sans-serif; letter-spacing: 0; fill: #e6ecf8; }

.win {
  margin-left: 2px;
  width: 1169px;
  height: 704px;
  display: flex;
  flex-direction: column;
  border-left: 3px solid #0a4fd8;
  border-right: 2px solid #0a4fd8;
  border-bottom: 2px solid #0a4fd8;
  background: #0a4fd8;
  border-top-left-radius: 7px;
  border-top-right-radius: 7px;
}

/* title bar */
.titlebar {
  height: 30px;
  flex: none;
  display: flex;
  align-items: center;
  padding-left: 3px;
  padding-top: 3px;
  margin: 0 -2px 0 -3px;
  border-radius: 7px 7px 0 0;
  background: linear-gradient(#0a57e0 0, #3b8cf5 2px, #0a5ce6 5px, #0056e0 60%, #0a64ec 85%, #0349c8 100%);
}
.ticon { width: 16px; height: 18px; margin-left: 2px; flex: none; }
.ttext {
  margin-left: 4px;
  font: bold 13.33px "Liberation Mono", monospace;
  letter-spacing: 0;
  color: #fff;
  text-shadow: 1px 1px 0 #0b2f8c;
}
.wbtns { margin-left: auto; margin-right: 5px; display: flex; gap: 3px; }
.wb {
  width: 20px; height: 21px;
  border: 1px solid #e6eefc;
  border-radius: 3px;
  display: flex; align-items: center; justify-content: center;
  background: radial-gradient(circle at 30% 30%, #6c95f0, #2a5ad8);
}
.wb-close { background: radial-gradient(circle at 30% 30%, #ee8a6a, #d4401a); }
.g-min { width: 8px; height: 3px; background: #fff; margin-top: 9px; margin-right: 2px; }
.g-max { width: 13px; height: 12px; border: 1px solid #fff; border-top-width: 3px; }

/* menu */
.menubar {
  height: 20px;
  flex: none;
  display: flex;
  align-items: center;
  padding-left: 9px;
  background: linear-gradient(#f2f2f2, #d2d2d2);
}
.mb { width: 58px; display: flex; align-items: center; flex: none; }

/* shell */
.shell {
  flex: 1;
  min-height: 0;
  display: grid;
  grid-template-columns: 71px 220px 566px 307px;
  grid-template-rows: 24px 603px 25px;
  background: #333;
}
.topbar {
  grid-column: 1 / -1;
  display: flex;
  align-items: center;
  border-top: 1px solid #222;
  background: linear-gradient(#666, #333);
}
.corner { width: 71px; height: 100%; flex: none; border-right: 1px solid #2a2a2a; }
.doctab { width: 207px; flex: none; display: flex; align-items: center; height: 100%; padding-left: 5px; border-right: 1px solid #777; }
.lock { margin-right: 7px; }
.docname { margin-left: 7px; color: #ddd; padding-top: 4px; }
.docarrow { margin-left: auto; margin-right: 4px; border: 4px solid transparent; border-top: 5px solid #ddd; border-bottom: 0; }
.docclose { width: 22px; flex: none; height: 100%; display: flex; align-items: center; justify-content: center; border-right: 1px solid #777; }
.fbtns { display: flex; gap: 5px; padding-left: 4px; align-items: center; }
.fb { width: 18px; height: 18px; flex: none; }

/* left rail */
.rail {
  grid-column: 1;
  grid-row: 2 / 4;
  display: flex;
  flex-direction: column;
  background: linear-gradient(90deg, #3a3a3a, #888 100%);
  border-right: 1px solid #222;
}
.rtab {
  height: 50px;
  flex: none;
  display: flex;
  flex-direction: column;
  align-items: center;
  justify-content: flex-end;
}
.rtab.first { padding-bottom: 1px; }
.rtab.active { background: linear-gradient(90deg, #bbb, #eee); margin-top: 1px; height: 49px; }
.ric { width: 30px; height: 30px; display: block; margin-bottom: -2px; flex: none; }
.rl { color: #fff; font-weight: bold; font-size: 11px; height: 13px; line-height: 13px; text-shadow: 0 1px 1px #222; position: relative; z-index: 1; }
.rl.m { margin-bottom: -2px; }
.rl.dark { color: #222; text-shadow: none; }
.rspace { height: 74px; flex: none; border-bottom: 1px solid #999; }
.kit { height: 70px; flex: none; display: flex; flex-direction: column; align-items: center; padding-top: 7px; }
.kitname { color: #eee; font-size: 11px; }
.kitrow { display: flex; align-items: center; width: 100%; justify-content: center; margin-top: 5px; }
.kitic { width: 36px; height: 34px; flex: none; }
.kitarrow { border: 4px solid transparent; border-left: 5px solid #ddd; border-right: 0; margin-left: 3px; margin-right: -7px; }
.runbtn { height: 38px; flex: none; display: flex; align-items: center; justify-content: center; margin-bottom: 1px; }
.run1 { margin-top: 12px; }
.run3 { height: 32px; }

/* widget box */
.wbox { grid-column: 2; grid-row: 2; display: flex; flex-direction: column; min-height: 0; background: #222; }
.fltrow { height: 23px; flex: none; padding: 3px 2px 1px; }
.flt {
  height: 19px;
  background: #fff;
  border-radius: 2px;
  border: 1px solid #111;
  box-shadow: inset 0 1px 1px #999;
  padding: 4px 3px;
  color: #888;
  font-size: 11px;
}
.wbody { flex: 1; display: flex; min-height: 0; border-right: 2px solid #111; }
.wlist { width: 204px; flex: none; background: #fff; overflow: hidden; }
.cat {
  height: 14px;
  display: flex;
  align-items: center;
  padding-left: 4px;
  background: linear-gradient(#f4f2e8, #e2dfcc);
  border-top: 1px solid #bdbaa8;
}
.item + .cat { margin-top: 1px; }
.catn { flex: 1; text-align: center; padding-right: 2px; padding-top: 1px; font-size: 11px; }
.exp {
  width: 9px; height: 9px; flex: none;
  background: #dfe8f2 linear-gradient(#222, #222) center / 5px 1px no-repeat;
  border: 1px solid #6f8fae;
  border-radius: 1px;
}
.exp.plus {
  background: linear-gradient(#222, #222) center / 5px 1px no-repeat, linear-gradient(#222, #222) center / 1px 5px no-repeat, #dfe8f2;
}
.item { height: 24px; display: flex; align-items: center; padding-left: 3px; padding-top: 2px; white-space: pre; }
.iic { width: 22px; height: 22px; margin-right: 7px; flex: none; margin-top: -2px; }

.vsb { width: 14px; flex: none; display: flex; flex-direction: column; background: #fbfbf5; }
.sbb {
  width: 14px; height: 16px; flex: none;
  display: flex; align-items: center; justify-content: center;
  background: linear-gradient(90deg, #dbe6fd, #b9cdf8);
  border: 1px solid #fff;
  border-radius: 2px;
  box-shadow: 0 0 0 1px #a9bfe6 inset;
}
.sbb.hz { width: 14px; height: 14px; }
.sbb.p { background: #f3f3ee; box-shadow: 0 0 0 1px #ddd inset; }
.vthumb {
  height: 298px; flex: none; margin-top: 2px;
  border: 1px solid #a9bff0;
  border-radius: 2px;
  background: linear-gradient(90deg, #c9d9fd, #b5cbfa);
  display: flex; align-items: center; justify-content: center;
}
.grip { width: 7px; height: 8px; background: repeating-linear-gradient(#eef3ff 0 1px, #8fa8dc 1px 2px); }
.sbfill { flex: 1; }

/* center */
.center { grid-column: 3; grid-row: 2; display: flex; flex-direction: column; position: relative; min-height: 0; border-right: 1px solid #111; border-left: 1px solid #111; }
.canvas { height: 471px; flex: none; background: #fff; padding: 12px 0 0 11px; }
.form {
  position: relative;
  width: 401px; height: 300px;
  border: 1px solid #b8b5a5;
  background-color: #ece9d8;
  background-image: radial-gradient(circle at .5px .5px, #7d7b70 .5px, transparent .6px);
  background-size: 10px 10px;
}
.f-line { position: absolute; left: 59px; top: 19px; width: 281px; height: 20px; background: #fff; border: 1px solid #7f9db9; }
.f-label { position: absolute; left: 58px; top: 63px; white-space: pre; }
.f-btn {
  position: absolute;
  display: flex; align-items: center; justify-content: center;
  background: linear-gradient(#fff, #ebe9dd);
  border: 1px solid #003c74;
  border-radius: 3px;
}
.f-btn.sel { left: 61px; top: 101px; width: 108px; height: 20px; border: 1px solid #f3c88a; border-bottom: 2px solid #e59700; padding-right: 3px; }
.f-btn.two { left: 210px; top: 100px; width: 120px; height: 22px; }
.hd { position: absolute; width: 6px; height: 6px; background: #000; border: 1px solid #00f; }
.h1 { left: 56px; top: 96px; }
.h2 { left: 111px; top: 96px; }
.h3 { left: 167px; top: 96px; }
.h4 { left: 56px; top: 107px; }
.h5 { left: 56px; top: 119px; }
.h6 { left: 111px; top: 119px; }

.actbar {
  height: 40px; flex: none;
  display: flex; align-items: center;
  padding-left: 6px; gap: 10px;
  border-top: 1px solid #111;
  background: linear-gradient(#6a6a6a, #3a3a3a);
}
.ab { width: 18px; height: 18px; flex: none; margin-right: 1px; }
.actflt { width: 200px; margin-left: auto; margin-right: 9px; }
.acthead { height: 19px; flex: none; display: flex; align-items: center; background: #ece9d8; border-bottom: 2px solid #dcd8c4; }
.ah { width: 100px; flex: none; padding-left: 4px; height: 13px; line-height: 13px; border-right: 1px solid #c6c3b2; }
.ah:first-child { width: 99px; }
.actbody { height: 37px; flex: none; background: #fff; }
.hsb { height: 16px; flex: none; display: flex; align-items: center; padding: 0 1px; background: #fbfbf5; border-bottom: 1px solid #aaa; }
.hthumb {
  width: 497px; height: 14px; margin-left: 3px; flex: none;
  border: 1px solid #a9bff0; border-radius: 2px;
  background: linear-gradient(#c9d9fd, #b5cbfa);
  display: flex; align-items: center; justify-content: center;
}
.hgrip { width: 8px; height: 7px; background: repeating-linear-gradient(90deg, #eef3ff 0 1px, #8fa8dc 1px 2px); }
.tabs { flex: 1; display: flex; align-items: flex-start; background: #ece9d8; }
.tab {
  height: 18px;
  padding: 5px 9px 0;
  white-space: pre;
  border: 1px solid #a9b8c8;
  border-top: 0;
  border-radius: 0 0 3px 3px;
  background: #f1efe3;
  width: 153px;
}
.tab.on { width: 103px; height: 20px; padding: 5px 12px 0; background: #fff; border: 0; border-bottom: 3px solid #f29a1c; }

/* context menu */
.ctx {
  position: absolute;
  left: 135px; top: 119px;
  width: 195px;
  padding: 2px;
  background: #fff;
  border: 1px solid #aca899;
  box-shadow: 1px 1px 0 #bbb;
  z-index: 5;
}
.mi { height: 16px; display: flex; align-items: center; padding-left: 25px; padding-right: 14px; white-space: pre; }
.mi.ic { height: 18px; padding-left: 2px; }
.mic { width: 18px; height: 18px; margin-right: 5px; flex: none; }
.mi.hi { background: #316ac5; color: #fff; margin-right: 1px; }
.dots { font-size: 11px; letter-spacing: 0; }
.ms { height: 1px; background: #aca899; margin: 3px 1px 5px; }
.sub { margin-left: auto; border: 3px solid transparent; border-left: 4px solid #111; border-right: 0; }
.sc { margin-left: auto; width: 36px; }
.redbox {
  position: absolute;
  left: 117px; top: 285px;
  width: 224px; height: 33px;
  border: 4px solid #b00000;
  box-shadow: 0 0 1px #c44;
  z-index: 6;
}

/* right panel */
.right { grid-column: 4; grid-row: 2; display: flex; flex-direction: column; min-height: 0; background: #fff; }
.objs { height: 208px; flex: none; display: flex; border-bottom: 1px solid #222; padding-right: 1px; }
.objmain { flex: 1; min-width: 0; }
.ohead { height: 21px; display: flex; align-items: center; background: #ece9d8; border-top: 1px solid #fff; border-bottom: 3px solid #dcd8c4; }
.oh1 { width: 181px; padding-left: 3px; flex: none; border-right: 1px solid #c6c3b2; height: 14px; line-height: 14px; }
.oh2 { padding-left: 5px; height: 14px; line-height: 14px; }
.orow { height: 16px; display: flex; align-items: center; white-space: pre; }
.orow.gry { background: #ebebeb; }
.orow.cur { background: #ece9d8; }
.on { width: 181px; flex: none; display: flex; align-items: center; height: 100%; padding-left: 6px; padding-top: 2px; }
.on .bn { margin-top: -2px; height: 16px; }
.oc { display: flex; align-items: center; padding-left: 4px; height: 100%; padding-top: 2px; }
.oic { width: 16px; height: 16px; margin-right: 5px; flex: none; margin-top: -2px; }
.oic.wd { margin-left: 7px; margin-right: 5px; }
.ox { flex: none; margin-top: -2px; }
.bn {
  flex: none;
  width: 11px;
  height: 100%;
  margin-left: 25px;
  margin-right: 1px;
  background:
    repeating-linear-gradient(#aaa 0 1px, transparent 1px 2px) 0 0 / 1px 100% no-repeat,
    repeating-linear-gradient(90deg, #aaa 0 1px, transparent 1px 2px) 0 50% / 100% 1px no-repeat;
}
.bn.end {
  background:
    repeating-linear-gradient(#aaa 0 1px, transparent 1px 2px) 0 0 / 1px 50% no-repeat,
    repeating-linear-gradient(90deg, #aaa 0 1px, transparent 1px 2px) 0 50% / 100% 1px no-repeat;
}
.vsb.pale { width: 15px; background: #fdfdfa; }
.vsb.pale .sbb { width: 15px; }

.ptool { height: 24px; flex: none; display: flex; align-items: center; padding-left: 2px; gap: 3px; background: linear-gradient(#666, #3a3a3a); }
.pflt { width: 235px; height: 20px; margin-right: 0; flex: none; padding-top: 5px; }
.pt-i { width: 20px; height: 18px; flex: none; }
.pclass { height: 16px; flex: none; background: #ece9d8; padding: 4px 2px 0; white-space: pre; border-bottom: 1px solid #fff; }
.phead { height: 21px; flex: none; display: flex; align-items: center; background: #ece9d8; border-bottom: 2px solid #dcd8c4; }
.ph1 { width: 161px; padding-left: 3px; flex: none; border-right: 1px solid #c6c3b2; height: 13px; line-height: 13px; }
.ph2 { padding-left: 4px; height: 13px; line-height: 13px; }
.pbody { flex: 1; background: #fff; }
.h15 { height: 15px; }
.h16 { height: 16px; }
.h17 { height: 17px; }
.h18 { height: 18px; }
.grp {
  display: flex; align-items: center;
  background: #a8a497;
  border-bottom: 1px solid #c9c7bd;
  padding-left: 6px;
  padding-top: 2px;
  color: #fff;
  font-weight: bold;
  letter-spacing: .4px;
}
.gx {
  width: 9px; height: 9px; flex: none; margin-right: 8px; margin-top: -2px;
  background: #e9e7dc linear-gradient(#111, #111) center / 5px 1px no-repeat;
}
.gx.plus { background: linear-gradient(#111, #111) center / 5px 1px no-repeat, linear-gradient(#111, #111) center / 1px 5px no-repeat, #e9e7dc; }
.pr { display: flex; align-items: stretch; border-bottom: 1px solid #cfcfcf; white-space: pre; }
.pn { width: 161px; flex: none; display: flex; align-items: center; border-right: 1px solid #cfcfcf; padding-top: 2px; }
.pn b { letter-spacing: .4px; }
.pn .bn { width: 11px; margin-left: 11px; margin-right: 1px; margin-top: -2px; height: calc(100% + 2px); }
.pn .px { margin-left: 7px; margin-right: 7px; margin-top: -2px; }
.pn.dis { color: #888; }
.pv { flex: 1; display: flex; align-items: center; padding-left: 3px; }
.pv.c { font-size: 12px; }
.pv.num { font-family: "Liberation Sans", sans-serif; font-size: 11px; letter-spacing: 0; }
.g1 { background: #b5ffb5; }
.g2 { background: #dfffdf; }
.c1 { background: #bfffff; }
.c2 { background: #dfffff; }
.obn { background: #ffefdd; }
.ck { width: 13px; height: 13px; flex: none; border: 1px solid #1c5180; background: linear-gradient(135deg, #dcdcd7, #fff); }
.ck.off { border-color: #bbb8a8; background: #f4f0e0; }

/* status bar */
.status {
  grid-column: 2 / 5;
  grid-row: 3;
  display: flex;
  align-items: center;
  background: linear-gradient(#585858, #3c3c3c);
  border-top: 1px solid #111;
  padding-left: 6px;
}
.togg { width: 15px; height: 15px; flex: none; background: #ddd; padding: 2px 3px; border: 1px solid #444; }
.togg span { display: block; width: 7px; height: 9px; background: #222; }
.locator {
  margin-left: 11px;
  width: 198px; height: 17px; flex: none;
  display: flex; align-items: center;
  padding-left: 4px; gap: 5px;
  background: #fff;
  border: 1px solid #222;
  border-radius: 2px;
  color: #888;
  white-space: pre;
}
.locator span { padding-top: 3px; }
.chips { display: flex; align-items: center; gap: 7px; margin-left: 11px; }
.chip { display: flex; height: 19px; flex: none; }
.chip .n { width: 17px; background: #6c6c6c; color: #ddd; border-radius: 3px 0 0 3px; display: flex; align-items: center; justify-content: center; font-family: "Liberation Sans", sans-serif; letter-spacing: 0; }
.chip .l { background: #d8d8d8; border-radius: 0 3px 3px 0; display: flex; align-items: center; padding-left: 3px; padding-top: 2px; white-space: pre; line-height: 1; }
.w30 { width: 30px; }
.w54 { width: 54px; }
.w79 { width: 79px; }
.w90 { width: 90px; }
.w96 { width: 96px; }
.updown { width: 17px; height: 19px; flex: none; background: #6c6c6c; border: 1px solid #888; border-radius: 3px; display: flex; align-items: center; justify-content: center; }
.expd { margin-left: auto; margin-right: 6px; width: 13px; height: 22px; flex: none; background: #444; display: flex; align-items: center; justify-content: center; }
.expd span { border: 4px solid transparent; border-bottom: 4px solid #eee; border-top: 0; }
.gripc { width: 14px; height: 14px; align-self: flex-end; flex: none; background: repeating-linear-gradient(135deg, transparent 0 2px, #777 2px 3px); }
```
